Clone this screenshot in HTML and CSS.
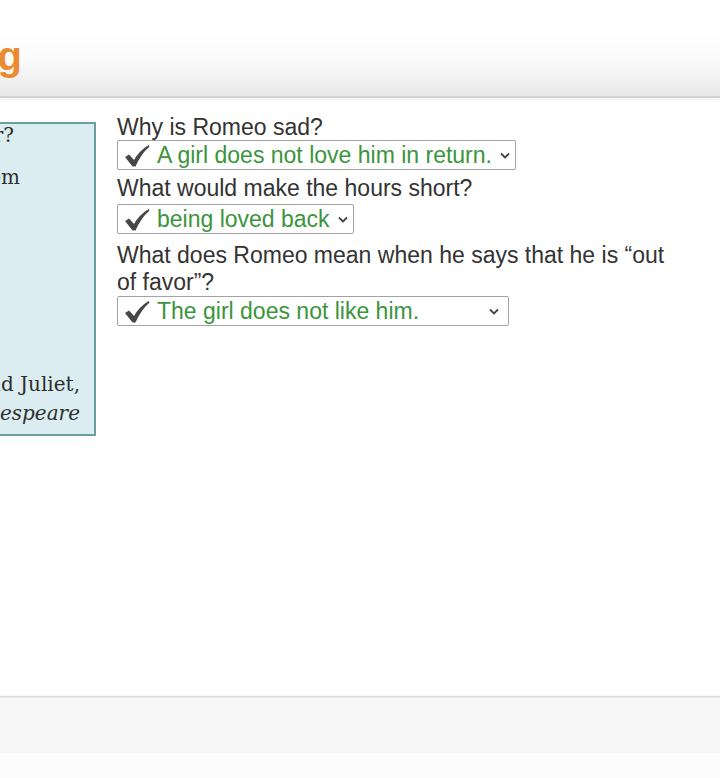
FILE: index.html
```html
<!DOCTYPE html>
<html lang="en">
<head>
<meta charset="utf-8">
<title>Close Reading</title>
<link rel="stylesheet" href="styles.css">
</head>
<body>
<div class="page">
  <header class="topbar">
    <div class="band">
      <div class="title-clip"><h1 class="title">Close Reading</h1></div>
    </div>
  </header>
  <main class="content">
    <aside class="passage">
      <div class="pline l1">Benvolio: What sadness lengthens Romeo’s hour?</div>
      <div class="pline l2">Romeo: Not having that which, having, makes them</div>
      <div class="cite">
        <div class="cline">Romeo and Juliet,</div>
        <div class="cline it">William Shakespeare</div>
      </div>
    </aside>
    <section class="questions">
      <p class="q q1">Why is Romeo sad?</p>
      <div class="dropdown d1">
        <svg class="check" width="26" height="24" viewBox="0 0 26 24"><path d="M1 13 L5 10.5 L10 16 Q15 7 24.5 1 L25.5 2.5 Q17 10 11.5 22.5 L8.5 22.5 Z" fill="#474747"/></svg>
        <span class="answer">A girl does not love him in return.</span>
        <svg class="chev" width="10" height="7" viewBox="0 0 10 7"><path d="M1 1.5 L5 5.5 L9 1.5" fill="none" stroke="#444" stroke-width="1.8"/></svg>
      </div>
      <p class="q q2">What would make the hours short?</p>
      <div class="dropdown d2">
        <svg class="check" width="26" height="24" viewBox="0 0 26 24"><path d="M1 13 L5 10.5 L10 16 Q15 7 24.5 1 L25.5 2.5 Q17 10 11.5 22.5 L8.5 22.5 Z" fill="#474747"/></svg>
        <span class="answer">being loved back</span>
        <svg class="chev" width="10" height="7" viewBox="0 0 10 7"><path d="M1 1.5 L5 5.5 L9 1.5" fill="none" stroke="#444" stroke-width="1.8"/></svg>
      </div>
      <p class="q q3">What does Romeo mean when he says that he is “out of favor”?</p>
      <div class="dropdown d3">
        <svg class="check" width="26" height="24" viewBox="0 0 26 24"><path d="M1 13 L5 10.5 L10 16 Q15 7 24.5 1 L25.5 2.5 Q17 10 11.5 22.5 L8.5 22.5 Z" fill="#474747"/></svg>
        <span class="answer">The girl does not like him.</span>
        <svg class="chev" width="10" height="7" viewBox="0 0 10 7"><path d="M1 1.5 L5 5.5 L9 1.5" fill="none" stroke="#444" stroke-width="1.8"/></svg>
      </div>
    </section>
  </main>
  <footer class="footer">
    <div class="footband"></div>
  </footer>
</div>
</body>
</html>
```

FILE: styles.css
```css
html, body {
  margin: 0;
  padding: 0;
  background: #ffffff;
}
body {
  width: 720px;
  height: 778px;
  overflow: hidden;
  font-family: "Liberation Sans", Arial, sans-serif;
  color: #333;
}
.page {
  display: flex;
  flex-direction: column;
  height: 778px;
}
.topbar {
  padding-top: 33px;
}
.band {
  height: 63px;
  background: linear-gradient(to bottom, #ffffff 0%, #fafafa 45%, #e8e8e8 100%);
  border-bottom: 2px solid #d2d2d2;
  box-shadow: 0 2px 3px rgba(0,0,0,0.05);
  display: flex;
  align-items: flex-start;
}
.title-clip {
  width: 22px;
  overflow: hidden;
  display: flex;
  justify-content: flex-end;
}
.title {
  margin: 0;
  white-space: nowrap;
  font-family: "Liberation Sans", Arial, sans-serif;
  font-weight: bold;
  font-size: 40px;
  line-height: 46px;
  color: #e98c2f;
}
.content {
  flex: 1;
  display: flex;
  align-items: flex-start;
  padding-top: 16px;
}
.passage {
  box-sizing: border-box;
  width: 96px;
  height: 314px;
  margin-top: 8px;
  background: #dbedf0;
  border: 2px solid #6a9f9f;
  border-left: none;
  overflow: hidden;
  display: flex;
  flex-direction: column;
  font-family: "DejaVu Serif", Georgia, serif;
  font-size: 20px;
  color: #2e2e2e;
}
.pline {
  display: flex;
  justify-content: flex-end;
  white-space: nowrap;
  line-height: 22px;
}
.l1 {
  padding-right: 80px;
  margin-top: 0px;
}
.l2 {
  padding-right: 74px;
  margin-top: 20px;
}
.cite {
  margin-top: auto;
  padding-bottom: 6px;
}
.cline {
  display: flex;
  justify-content: flex-end;
  white-space: nowrap;
  line-height: 29px;
  padding-right: 14px;
}
.it {
  font-style: italic;
}
.questions {
  margin-left: 21px;
  display: flex;
  flex-direction: column;
  align-items: flex-start;
  width: 570px;
}
.q {
  margin: 0;
  font-size: 23px;
  line-height: 26px;
  color: #333;
}
.q2 { margin-top: 5px; }
.q3 { margin-top: 8px; line-height: 27px; }
.dropdown {
  box-sizing: border-box;
  height: 30px;
  border: 1px solid #a3a3a3;
  border-radius: 2px;
  background: #fff;
  display: flex;
  align-items: center;
  padding: 0 5px 0 6px;
}
.d1 { margin-top: 0px; }
.d2 { margin-top: 3px; }
.d3 { margin-top: 0px; width: 392px; }
.check {
  flex: none;
  margin-right: 7px;
  margin-top: 2px;
}
.answer {
  font-size: 23px;
  line-height: 28px;
  color: #3a953c;
  white-space: nowrap;
}
.chev {
  flex: none;
  margin-left: 8px;
}
.d3 .chev {
  margin-left: auto;
  margin-right: 4px;
}
.footer {
  height: 81px;
  border-top: 1px solid #dcdcdc;
  box-shadow: 0 -1px 2px rgba(0,0,0,0.04);
  background: #fcfcfc;
}
.footband {
  height: 55px;
  background: #f7f7f7;
  border-top: 1px solid #eaeaea;
}
```
